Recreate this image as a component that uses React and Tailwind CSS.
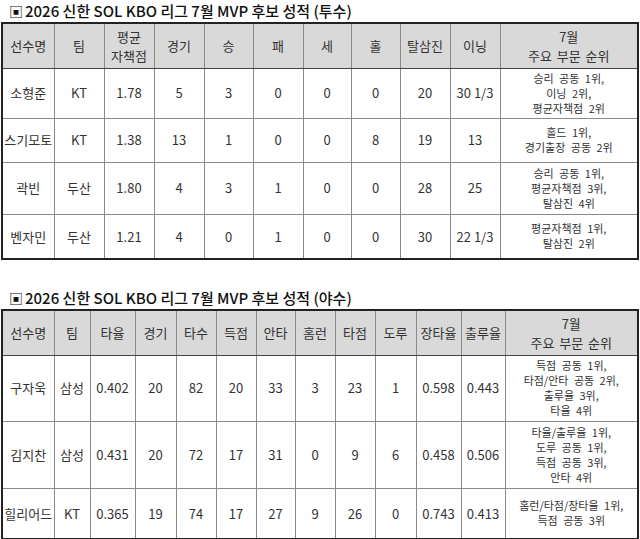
import React from 'react'

const font = { fontFamily: '"Noto Sans CJK KR", "Noto Sans", sans-serif' }

const pitchCols = [52, 50, 50, 50, 49, 50, 48, 49, 50, 50, 138]
const pitchHead = ['선수명', '팀', ['평균', '자책점'], '경기', '승', '패', '세', '홀', '탈삼진', '이닝', ['7월', '주요 부문 순위']]
const pitchRows = [
  { h: 'h-[50px]', cells: ['소형준', 'KT', '1.78', '5', '3', '0', '0', '0', '20', '30 1/3'], note: ['승리 공동 1위,', '이닝 2위,', '평균자책점 2위'] },
  { h: 'h-[44px]', cells: ['스기모토', 'KT', '1.38', '13', '1', '0', '0', '8', '19', '13'], note: ['홀드 1위,', '경기출장 공동 2위'] },
  { h: 'h-[52px]', cells: ['곽빈', '두산', '1.80', '4', '3', '1', '0', '0', '28', '25'], note: ['승리 공동 1위,', '평균자책점 3위,', '탈삼진 4위'] },
  { h: 'h-[45px]', cells: ['벤자민', '두산', '1.21', '4', '0', '1', '0', '0', '30', '22 1/3'], note: ['평균자책점 1위,', '탈삼진 2위'] },
]

const batCols = [52, 36, 45, 41, 40, 40, 39, 40, 40, 41, 45, 44, 133]
const batHead = ['선수명', '팀', '타율', '경기', '타수', '득점', '안타', '홈런', '타점', '도루', '장타율', '출루율', ['7월', '주요 부문 순위']]
const batRows = [
  { h: 'h-[66px]', cells: ['구자욱', '삼성', '0.402', '20', '82', '20', '33', '3', '23', '1', '0.598', '0.443'], note: ['득점 공동 1위,', '타점/안타 공동 2위,', '출루율 3위,', '타율 4위'] },
  { h: 'h-[67px]', cells: ['김지찬', '삼성', '0.431', '20', '72', '17', '31', '0', '9', '6', '0.458', '0.506'], note: ['타율/출루율 1위,', '도루 공동 1위,', '득점 공동 3위,', '안타 4위'] },
  { h: 'h-[51px]', cells: ['힐리어드', 'KT', '0.365', '19', '74', '17', '27', '9', '26', '0', '0.743', '0.413'], note: ['홈런/타점/장타율 1위,', '득점 공동 3위'] },
]

const Title = ({ children }) => (
  <div className="flex items-center pl-[9px] h-[22px] text-[15px] font-medium text-[#111]">
    <span className="mr-[2px] text-[14px]">▣</span>
    {children}
  </div>
)

const StatTable = ({ cols, head, rows }) => (
  <table className="ml-[1px] border-collapse border-2 border-[#222] table-fixed text-[#333] text-[13px]" style={{ width: cols.reduce((a, b) => a + b, 0) }}>
    <colgroup>
      {cols.map((w, i) => (
        <col key={i} style={{ width: w }} />
      ))}
    </colgroup>
    <thead>
      <tr className="h-[45px] bg-[#d9d9d9]">
        {head.map((c, i) => (
          <th key={i} className="border border-[#8a8a8a] border-b-[#444] font-normal text-center leading-[19px] p-0 [word-spacing:2px]">
            {Array.isArray(c) ? c.map((l) => <div key={l}>{l}</div>) : c}
          </th>
        ))}
      </tr>
    </thead>
    <tbody>
      {rows.map((r, ri) => (
        <tr key={ri} className={r.h}>
          {r.cells.map((c, i) => (
            <td key={i} className="border border-[#8a8a8a] text-center p-0 whitespace-nowrap">
              {c}
            </td>
          ))}
          <td className="border border-[#8a8a8a] text-center p-0 text-[11px] leading-[15px] [word-spacing:3px] whitespace-nowrap">
            {r.note.map((l) => (
              <div key={l}>{l}</div>
            ))}
          </td>
        </tr>
      ))}
    </tbody>
  </table>
)

export default function App() {
  return (
    <div className="w-[640px] h-[539px] bg-white overflow-hidden" style={font}>
      <Title>2026 신한 SOL KBO 리그 7월 MVP 후보 성적 (투수)</Title>
      <StatTable cols={pitchCols} head={pitchHead} rows={pitchRows} />
      <div className="mt-[27px]">
        <Title>2026 신한 SOL KBO 리그 7월 MVP 후보 성적 (야수)</Title>
        <StatTable cols={batCols} head={batHead} rows={batRows} />
      </div>
    </div>
  )
}
